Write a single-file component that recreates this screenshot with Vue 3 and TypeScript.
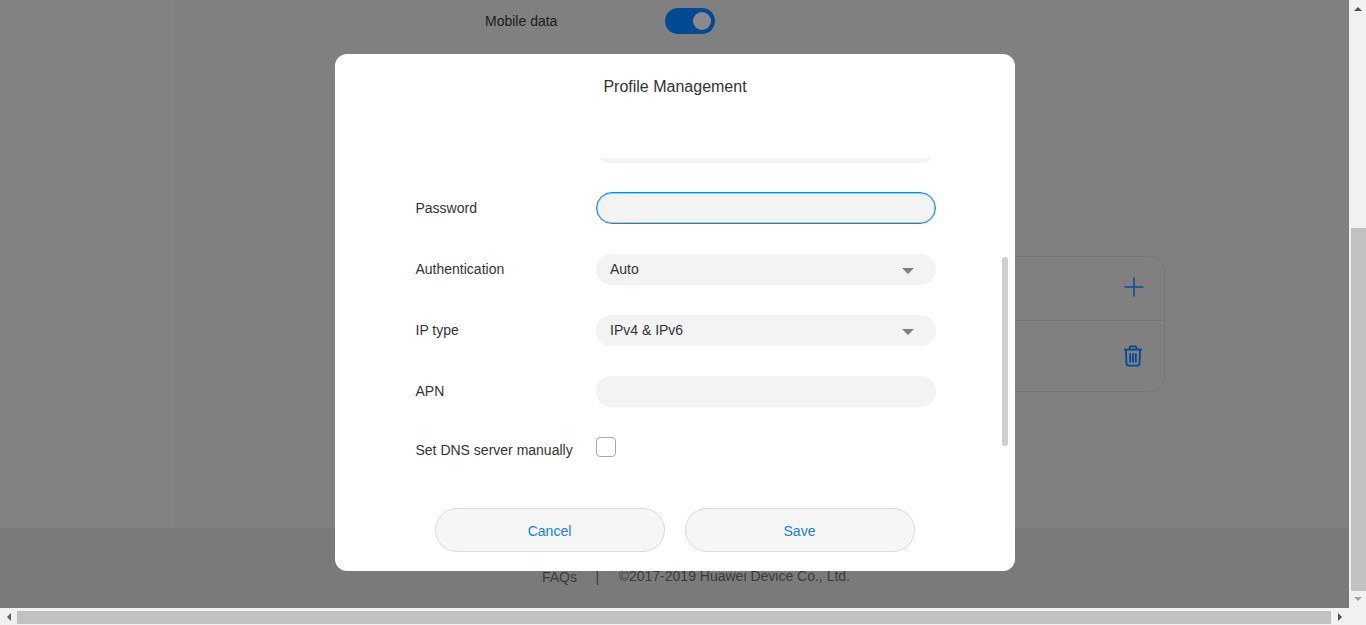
<script setup lang="ts">
interface Field { label: string; value: string; kind: 'text' | 'select' | 'focus' }
const fields: Field[] = [
  { label: 'Password', value: '', kind: 'focus' },
  { label: 'Authentication', value: 'Auto', kind: 'select' },
  { label: 'IP type', value: 'IPv4 & IPv6', kind: 'select' },
  { label: 'APN', value: '', kind: 'text' },
]
</script>

<template>
  <div class="root">
    <div class="upper">
      <div class="page">
        <main class="main">
          <div class="data-row">
            <span class="data-label">Mobile data</span>
            <span class="toggle"><span class="knob"></span></span>
          </div>
          <div class="card">
            <div class="card-row card-row-top">
              <svg class="ico" width="22" height="22" viewBox="0 0 22 22">
                <path d="M11 1.5V20.5M1.5 11H20.5" stroke="#0b4f9b" stroke-width="1.6" fill="none" />
              </svg>
            </div>
            <div class="card-row card-row-bottom">
              <svg class="ico ico-trash" width="20" height="22" viewBox="0 0 20 22" fill="none" stroke="#034a94" stroke-width="1.8">
                <path d="M1 4.6H19" />
                <path d="M6.6 4.4V2.6C6.6 1.8 7.1 1.3 7.9 1.3H12.1C12.9 1.3 13.4 1.8 13.4 2.6V4.4" />
                <path d="M2.9 4.8L3.5 18.8C3.6 20 4.2 20.6 5.4 20.6H14.6C15.8 20.6 16.4 20 16.5 18.8L17.1 4.8" />
                <path d="M7.2 8.2V17.4M10 8.2V17.4M12.8 8.2V17.4" />
              </svg>
            </div>
          </div>
        </main>
        <footer class="footer">
          <span>FAQs</span>
          <span class="sep">|</span>
          <span class="copy">©2017-2019 Huawei Device Co., Ltd.</span>
        </footer>

        <div class="dialog">
          <h2 class="title">Profile Management</h2>
          <div class="form-view">
            <div class="form">
              <div class="row">
                <span class="label"></span>
                <div class="input"></div>
              </div>
              <div v-for="f in fields" :key="f.label" class="row">
                <span class="label">{{ f.label }}</span>
                <div class="input" :class="{ focus: f.kind === 'focus' }">
                  <span>{{ f.value }}</span>
                  <span v-if="f.kind === 'select'" class="caret"></span>
                </div>
              </div>
              <div class="row row-check">
                <span class="label">Set DNS server manually</span>
                <span class="check"></span>
              </div>
            </div>
            <div class="form-thumb"></div>
          </div>
          <div class="actions">
            <button class="btn" type="button">Cancel</button>
            <button class="btn" type="button">Save</button>
          </div>
        </div>
      </div>
      <div class="vbar">
        <span class="arrow arrow-up"></span>
        <div class="vtrack"><div class="vthumb"></div></div>
        <span class="arrow arrow-down"></span>
      </div>
    </div>
    <div class="hbar">
      <span class="harrow"><span class="arrow-left"></span></span>
      <div class="hthumb"></div>
      <span class="harrow"><span class="arrow-right"></span></span>
      <span class="corner"></span>
    </div>
  </div>
</template>

<style>
html, body { margin: 0; overflow: hidden; }
</style>

<style scoped>
.root {
  width: 1366px;
  height: 625px;
  display: flex;
  flex-direction: column;
  overflow: hidden;
  font-family: "Liberation Sans", Arial, sans-serif;
  background: #f1f1f1;
}
.upper { display: flex; height: 608px; }
.page {
  position: relative;
  width: 1349px;
  display: flex;
  flex-direction: column;
  background: #808080;
  overflow: hidden;
}
.main {
  height: 528px;
  box-sizing: border-box;
  background: linear-gradient(to right, #828282 0, #828282 175px, #808080 175px);
  padding-top: 8px;
  display: flex;
  flex-direction: column;
}
.data-row { display: flex; align-items: center; height: 26px; padding-left: 485px; }
.data-label { width: 180px; font-size: 14px; color: #1c1c1c; }
.toggle {
  width: 50px;
  height: 26px;
  border-radius: 13px;
  background: #034a94;
  display: flex;
  align-items: center;
  justify-content: flex-end;
  padding-right: 4px;
  box-sizing: border-box;
}
.knob { width: 18px; height: 18px; border-radius: 50%; background: #8a8a8a; border: 0; }
.card {
  margin-top: 222px;
  margin-left: 800px;
  width: 365px;
  height: 136px;
  box-sizing: border-box;
  border: 1px solid #767676;
  border-radius: 14px;
  display: flex;
  flex-direction: column;
}
.card-row { display: flex; justify-content: flex-end; align-items: center; padding-right: 20px; }
.card-row-top { height: 64px; box-sizing: border-box; border-bottom: 1px solid #767676; padding-right: 19px; padding-bottom: 3px; }
.card-row-bottom { flex: 1; padding-right: 21px; padding-bottom: 1px; }
.footer {
  flex: 1;
  background: #7a7a7a;
  display: flex;
  align-items: flex-start;
  padding: 41px 0 0 542px;
  font-size: 14px;
  color: #3a3a3a;
}
.sep { margin-left: 18.5px; }
.copy { margin-left: 19.5px; margin-top: -1px; }

.dialog {
  position: absolute;
  left: 335px;
  top: 54px;
  width: 680px;
  height: 517px;
  background: #fff;
  border-radius: 12px;
  display: flex;
  flex-direction: column;
}
.title {
  margin: 0;
  padding-top: 23px;
  height: 81px;
  box-sizing: border-box;
  text-align: center;
  font-size: 16px;
  line-height: 19px;
  font-weight: 400;
  color: #333;
}
.form-view { position: relative; height: 345px; overflow: hidden; margin-top: 23px; }
.form { margin-top: -26px; padding-left: 80px; display: flex; flex-direction: column; gap: 30px; }
.row { display: flex; align-items: center; height: 31px; }
.row-check { height: 20px; }
.label {
  width: 181px;
  box-sizing: border-box;
  padding: 0 0 2px 0.5px;
  font-size: 14px;
  color: #333;
}
.row-check .label { padding: 6px 0 0 0.5px; }
.input {
  width: 340px;
  height: 31px;
  box-sizing: border-box;
  border-radius: 16px;
  background: #f3f3f3;
  display: flex;
  align-items: center;
  justify-content: space-between;
  padding: 0 22px 2px 14px;
  font-size: 14px;
  color: #333;
}
.input.focus {
  height: 32px;
  align-self: flex-start;
  margin-top: -1px;
  border: 1px solid #0a8ad6;
  box-shadow: inset 0 0 0 1px rgba(10, 138, 214, 0.35);
  background: #f2f3f3;
}
.caret {
  width: 0;
  height: 0;
  border-left: 6px solid transparent;
  border-right: 6px solid transparent;
  border-top: 6px solid #808080;
  margin-top: 4px;
}
.check {
  width: 20px;
  height: 20px;
  box-sizing: border-box;
  border: 1px solid #a8a8a8;
  border-radius: 4px;
  background: #fff;
  margin-top: 0;
}
.form-thumb {
  position: absolute;
  left: 667px;
  top: 99px;
  width: 6px;
  height: 189px;
  border-radius: 3px;
  background: #cfcfcf;
}
.actions {
  display: flex;
  justify-content: center;
  gap: 20px;
  margin-top: 5px;
}
.btn {
  width: 230px;
  height: 44px;
  box-sizing: border-box;
  border: 1px solid #dcdcdc;
  border-radius: 22px;
  background: #f6f6f6;
  color: #0a84d6;
  font: 14px "Liberation Sans", Arial, sans-serif;
  padding: 2px 1px 0 0;
}

.vbar {
  width: 17px;
  height: 608px;
  display: flex;
  flex-direction: column;
  align-items: center;
  background: #f1f1f1;
}
.arrow { width: 0; height: 0; border-left: 4px solid transparent; border-right: 4px solid transparent; flex: none; }
.arrow-up { border-bottom: 4px solid #505050; margin-top: 7px; margin-bottom: 6px; }
.arrow-down { border-top: 4px solid #a3a3a3; margin-top: 6px; margin-bottom: 7px; }
.vtrack { flex: 1; width: 100%; display: flex; justify-content: center; align-items: flex-end; }
.vthumb { width: 15px; height: 363px; background: #c1c1c1; margin-left: 1px; }

.hbar { height: 17px; display: flex; align-items: center; background: #f1f1f1; }
.harrow { width: 17px; display: flex; justify-content: center; }
.arrow-left, .arrow-right { width: 0; height: 0; border-top: 4px solid transparent; border-bottom: 4px solid transparent; }
.arrow-left { border-right: 4px solid #606060; }
.arrow-right { border-left: 4px solid #505050; }
.hthumb { width: 1314px; height: 13px; background: #c1c1c1; margin-top: 1px; }
.corner { width: 18px; height: 17px; background: #f1f1f1; }
</style>
